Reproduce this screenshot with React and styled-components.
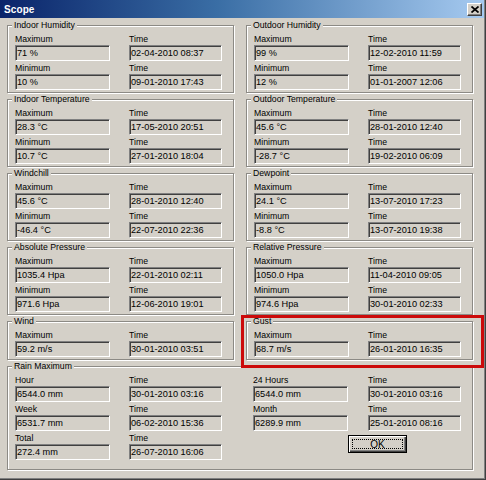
import styled, { createGlobalStyle } from "styled-components";

const GlobalStyle = createGlobalStyle`
  html, body {
    margin: 0;
    padding: 0;
    background: #d4d0c8;
  }
  body {
    font-family: "Liberation Sans", Arial, sans-serif;
    font-size: 8.7px;
    color: #000;
  }
`;

// Window chrome
const Window = styled.div`
  width: 486px;
  height: 480px;
  box-sizing: border-box;
  padding-right: 2px;
  background: #d4d0c8;
  box-shadow: inset -1px -1px 0 #404040, inset -2px -2px 0 #808080;
  display: flex;
  flex-direction: column;
  overflow: hidden;
`;

const TitleBar = styled.div`
  height: 18px;
  flex: none;
  display: flex;
  align-items: center;
  justify-content: space-between;
  padding: 0 2px 0 4px;
  background: linear-gradient(90deg, #0a246a 0%, #3a6ea5 45%, #a6caf0 100%);
`;

const TitleText = styled.span`
  color: #fff;
  font-weight: bold;
  font-size: 10px;
  letter-spacing: 0.1px;
`;

const CloseButton = styled.button`
  width: 15px;
  height: 13px;
  padding: 0;
  display: flex;
  align-items: center;
  justify-content: center;
  background: #d4d0c8;
  border: 1px solid;
  border-color: #fff #404040 #404040 #fff;
  box-shadow: inset -1px -1px 0 #808080;
`;

const Body = styled.div`
  display: grid;
  grid-template-columns: 227px 227px;
  column-gap: 12px;
  row-gap: 1px;
  padding: 2px 0 0 7px;
`;

// Group box
const Group = styled.fieldset`
  margin: 0;
  padding: 4px 7px ${(p) => p.$bottom || 2}px 7px;
  min-width: 0;
  border: 1px solid #8c8a85;
  box-shadow: inset 1px 1px 0 #fff, 1px 1px 0 #fff;
  grid-column: ${(p) => (p.$wide ? "1 / -1" : "auto")};
`;

const Legend = styled.legend`
  margin-left: -3px;
  padding: 0 2px;
  line-height: 10px;
  background: #d4d0c8;
`;

const Rows = styled.div`
  display: grid;
  grid-template-columns: 95px 93px;
  column-gap: 19px;
  row-gap: 2px;
`;

const Field = styled.div`
  display: flex;
  flex-direction: column;
`;

const Caption = styled.span`
  line-height: 11px;
  white-space: nowrap;
`;

const ValueBox = styled.div`
  height: 16px;
  box-sizing: border-box;
  padding-left: 1px;
  font-size: 9.2px;
  line-height: 14px;
  white-space: nowrap;
  overflow: hidden;
  background: #d4d0c8;
  border: 1px solid;
  border-color: #808080 #fff #fff #808080;
  box-shadow: inset 1px 1px 0 #404040;
`;

const Highlight = styled.div`
  position: relative;
  display: grid;

  &::after {
    content: "";
    position: absolute;
    top: -1px;
    left: -5px;
    right: -11px;
    bottom: -8px;
    border: 3px solid #cc0a0a;
    pointer-events: none;
  }
`;

const RainLayout = styled.div`
  display: flex;
  gap: 31px;
`;

const RainHalf = styled.div`
  display: grid;
  grid-template-columns: 95px 93px;
  column-gap: ${(p) => p.$gap}px;
  row-gap: 2px;
  align-content: start;
`;

const ButtonRow = styled.div`
  grid-column: 1 / -1;
  padding: 2px 0 0 95px;
`;

const OkButton = styled.button`
  width: 59px;
  height: 18px;
  padding: 0;
  font: inherit;
  font-size: 10px;
  color: #000;
  background: #d4d0c8;
  border: 1px solid #000;
  box-shadow: inset 1px 1px 0 #fff, inset -1px -1px 0 #404040, inset -2px -2px 0 #808080;
  position: relative;

  &::before {
    content: "";
    position: absolute;
    inset: 3px;
    border: 1px dotted #000;
  }
`;

const leftGroups = [
  {
    title: "Indoor Humidity",
    rows: [
      ["Maximum", "71 %", "02-04-2010 08:37"],
      ["Minimum", "10 %", "09-01-2010 17:43"],
    ],
  },
  {
    title: "Indoor Temperature",
    rows: [
      ["Maximum", "28.3 °C", "17-05-2010 20:51"],
      ["Minimum", "10.7 °C", "27-01-2010 18:04"],
    ],
  },
  {
    title: "Windchill",
    rows: [
      ["Maximum", "45.6 °C", "28-01-2010 12:40"],
      ["Minimum", "-46.4 °C", "22-07-2010 22:36"],
    ],
  },
  {
    title: "Absolute Pressure",
    rows: [
      ["Maximum", "1035.4 Hpa", "22-01-2010 02:11"],
      ["Minimum", "971.6 Hpa", "12-06-2010 19:01"],
    ],
  },
  {
    title: "Wind",
    rows: [["Maximum", "59.2 m/s", "30-01-2010 03:51"]],
  },
];

const rightGroups = [
  {
    title: "Outdoor Humidity",
    rows: [
      ["Maximum", "99 %", "12-02-2010 11:59"],
      ["Minimum", "12 %", "01-01-2007 12:06"],
    ],
  },
  {
    title: "Outdoor Temperature",
    rows: [
      ["Maximum", "45.6 °C", "28-01-2010 12:40"],
      ["Minimum", "-28.7 °C", "19-02-2010 06:09"],
    ],
  },
  {
    title: "Dewpoint",
    rows: [
      ["Maximum", "24.1 °C", "13-07-2010 17:23"],
      ["Minimum", "-8.8 °C", "13-07-2010 19:38"],
    ],
  },
  {
    title: "Relative Pressure",
    rows: [
      ["Maximum", "1050.0 Hpa", "11-04-2010 09:05"],
      ["Minimum", "974.6 Hpa", "30-01-2010 02:33"],
    ],
  },
  {
    title: "Gust",
    rows: [["Maximum", "68.7 m/s", "26-01-2010 16:35"]],
    highlight: true,
  },
];

const rainLeft = [
  ["Hour", "6544.0 mm", "30-01-2010 03:16"],
  ["Week", "6531.7 mm", "06-02-2010 15:36"],
  ["Total", "272.4 mm", "26-07-2010 16:06"],
];

const rainRight = [
  ["24 Hours", "6544.0 mm", "30-01-2010 03:16"],
  ["Month", "6289.9 mm", "25-01-2010 08:16"],
];

const LabeledValue = ({ label, value }) => (
  <Field>
    <Caption>{label}</Caption>
    <ValueBox>{value}</ValueBox>
  </Field>
);

const PairRows = ({ rows }) =>
  rows.map(([label, value, time]) => [
    <LabeledValue key={label + "v"} label={label} value={value} />,
    <LabeledValue key={label + "t"} label="Time" value={time} />,
  ]);

const StatGroup = ({ group }) => {
  const box = (
    <Group>
      <Legend>{group.title}</Legend>
      <Rows>
        <PairRows rows={group.rows} />
      </Rows>
    </Group>
  );
  return group.highlight ? <Highlight>{box}</Highlight> : box;
};

const App = () => {
  // interleave so both columns share grid rows
  const pairs = leftGroups.map((g, i) => [g, rightGroups[i]]);

  return (
    <>
      <GlobalStyle />
      <Window>
        <TitleBar>
          <TitleText>Scope</TitleText>
          <CloseButton aria-label="Close">
            <svg width="8" height="7" viewBox="0 0 8 7">
              <path d="M0.5 0.5 L7.5 6.5 M7.5 0.5 L0.5 6.5" stroke="#000" strokeWidth="1.7" />
            </svg>
          </CloseButton>
        </TitleBar>
        <Body>
          {pairs.map(([l, r]) => [
            <StatGroup key={l.title} group={l} />,
            <StatGroup key={r.title} group={r} />,
          ])}
          <Group $wide $bottom={9}>
            <Legend>Rain Maximum</Legend>
            <RainLayout>
              <RainHalf $gap={19}>
                <PairRows rows={rainLeft} />
              </RainHalf>
              <RainHalf $gap={20}>
                <PairRows rows={rainRight} />
                <ButtonRow>
                  <OkButton>OK</OkButton>
                </ButtonRow>
              </RainHalf>
            </RainLayout>
          </Group>
        </Body>
      </Window>
    </>
  );
};

export default App;
